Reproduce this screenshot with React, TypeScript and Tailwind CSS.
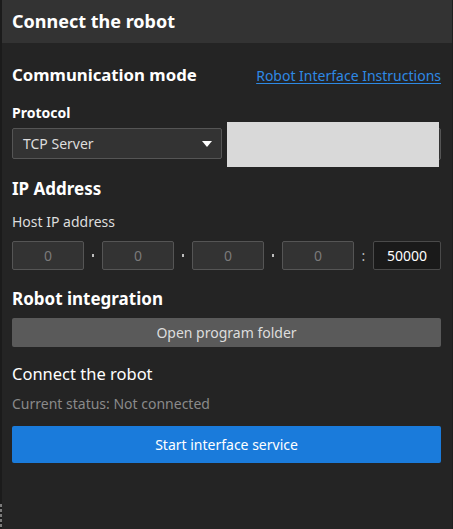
import React from "react";

const font = { fontFamily: '"Noto Sans", "Open Sans", sans-serif' };

function IpBox({ value }: { value: string }) {
  return (
    <div className="w-[72px] h-[29px] bg-[#333333] border border-[#555555] rounded-[2px] flex items-center justify-center text-[14px] text-[#7a7a7a]">
      {value}
    </div>
  );
}

function Dot() {
  return (
    <div className="w-[18px] flex items-center justify-center">
      <div className="w-[2px] h-[3px] bg-[#bdbdbd]" />
    </div>
  );
}

export default function App() {
  return (
    <div className="w-[453px] h-[529px] flex bg-[#242424] text-white overflow-hidden" style={font}>
      <div className="w-[2px] h-full bg-[#1b1b1b] flex flex-col justify-end pb-[2px] gap-[2px]">
        <div className="h-[3px] bg-[#7a7a7a]" />
        <div className="h-[3px] bg-[#7a7a7a]" />
        <div className="h-[3px] bg-[#7a7a7a]" />
        <div className="h-[3px] bg-[#7a7a7a]" />
        <div className="h-[3px] bg-[#7a7a7a]" />
      </div>
      <div className="flex-1 flex flex-col border-r border-[#1e1e1e]">
        <div className="h-[43px] bg-[#333333] flex items-center px-[10px] pb-[2px]">
          <span className="text-[18px] font-bold leading-none text-white">Connect the robot</span>
        </div>
        <div className="flex flex-col px-[10px] pr-[11px]">
          <div className="mt-[20px] h-[24px] flex items-center justify-between">
            <span className="text-[16.75px] font-bold text-white">Communication mode</span>
            <a className="text-[14px] text-[#2e89e4] underline underline-offset-2 cursor-pointer">
              Robot Interface Instructions
            </a>
          </div>
          <div className="mt-[15px] h-[20px] flex items-center text-[14px] font-bold text-white">Protocol</div>
          <div className="mt-[6px] flex gap-[5px]">
            <div className="w-[210px] h-[31px] bg-[#333333] border border-[#555555] rounded-[2px] flex items-center justify-between pl-[10px] pr-[9px]">
              <span className="text-[14px] text-[#dddddd]">TCP Server</span>
              <svg width="10" height="6" viewBox="0 0 10 6">
                <path d="M0 0 H10 L5 6 Z" fill="#ffffff" />
              </svg>
            </div>
            <div className="relative flex-1 h-[32px] bg-[#333333] border border-[#555555] rounded-[2px]">
              <div className="absolute left-[-1px] right-[1px] top-[-7px] bottom-[-8px] bg-[#d9d9d9]" />
            </div>
          </div>
          <div className="mt-[17px] h-[24px] flex items-center text-[17px] font-bold text-white">IP Address</div>
          <div className="mt-[10px] h-[20px] flex items-center text-[14px] text-[#dddddd]">Host IP address</div>
          <div className="mt-[10px] flex items-center">
            <IpBox value="0" />
            <Dot />
            <IpBox value="0" />
            <Dot />
            <IpBox value="0" />
            <Dot />
            <IpBox value="0" />
            <div className="w-[19px] flex items-center justify-center text-[14px] text-[#bdbdbd]">:</div>
            <div className="flex-1 h-[29px] bg-[#1a1a1a] border border-[#4a4a4a] rounded-[2px] flex items-center justify-center text-[14px] text-white">
              50000
            </div>
          </div>
          <div className="mt-[17px] h-[24px] flex items-center text-[17px] font-bold text-white">Robot integration</div>
          <button className="mt-[7px] h-[29px] w-full bg-[#5a5a5a] rounded-[2px] flex items-center justify-center text-[14px] text-[#dddddd]">
            Open program folder
          </button>
          <div className="mt-[15px] h-[24px] flex items-center text-[16.5px] text-white">Connect the robot</div>
          <div className="mt-[7px] h-[20px] flex items-center text-[14px] text-[#8a8a8a]">Current status: Not connected</div>
          <button className="mt-[13px] h-[37px] w-full bg-[#1a7bdb] rounded-[2px] flex items-center justify-center text-[14px] text-white">
            Start interface service
          </button>
        </div>
      </div>
    </div>
  );
}
